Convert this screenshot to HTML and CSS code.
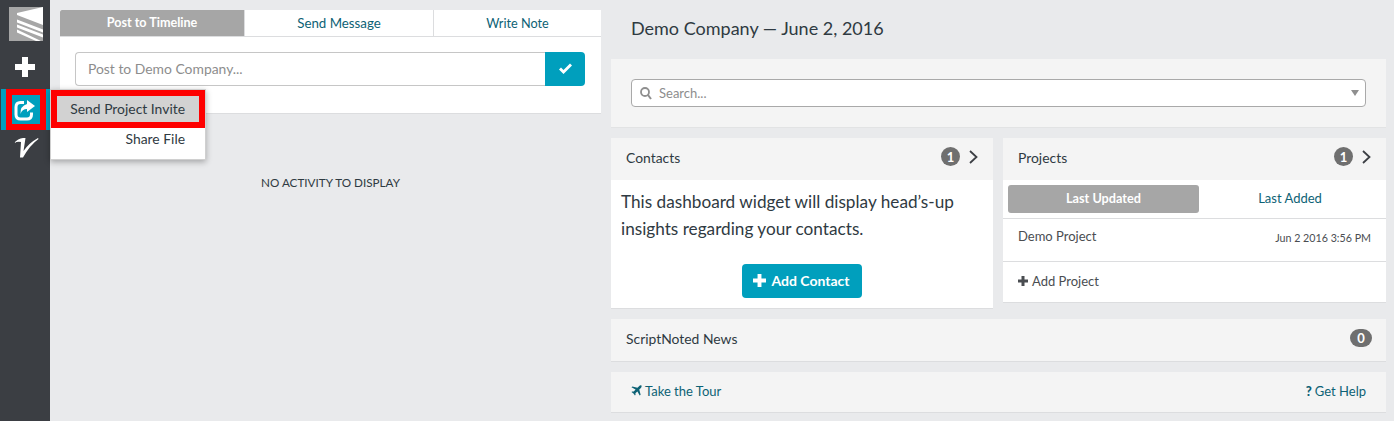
FILE: index.html
```html
<!DOCTYPE html>
<html lang="en">
<head>
<meta charset="utf-8">
<title>Demo Company</title>
<link rel="stylesheet" href="styles.css">
</head>
<body>
<div class="app">
  <nav class="side">
    <div class="logo">
      <svg width="34" height="34" viewBox="0 0 34 34"><rect width="34" height="34" fill="#a6a6a6"/><path d="M8 6L34 0V18L8 8Z" fill="#fff"/><path d="M8 12.500L34 22.500V25.500L8 15.500ZM8 17.500L34 27.500V30.500L8 20.500ZM8 22.500L32 34H27L8 25.500Z" fill="#fff"/></svg>
    </div>
    <div class="side-plus">
      <svg width="20" height="20" viewBox="0 0 20 20"><path d="M7 0H13V7H20V13H13V20H7V13H0V7H7Z" fill="#fff"/></svg>
    </div>
    <div class="side-share">
      <div class="share-icon">
        <svg width="22" height="22" viewBox="0 0 22 22" fill="none"><path d="M10 3.500H6.500Q2 3.500 2 8V15.500Q2 20 6.500 20H13Q17.500 20 17.500 15.500V13.500" stroke="#fff" stroke-width="3"/><path d="M13 1L21 7L13 13V10Q8 10 6.500 15Q6 7 13 5Z" fill="#fff"/></svg>
      </div>
    </div>
    <div class="side-v">
      <svg width="26" height="21" viewBox="0 0 26 21"><path d="M1 6Q5 1.500 10 1L12.500 1L10.500 14Q16 6 25 1L25.500 2Q17 8 10 20.500H7L8 5Q5 4 1 6Z" fill="#fff"/></svg>
    </div>
  </nav>

  <main class="timeline">
    <div class="composer">
      <div class="tabs">
        <div class="tab tab-active">Post to Timeline</div>
        <div class="tab tab-mid">Send Message</div>
        <div class="tab tab-last">Write Note</div>
      </div>
      <div class="post-row">
        <div class="post-input">Post to Demo Company...</div>
        <div class="post-btn">
          <svg width="15" height="12" viewBox="0 0 15 12"><path d="M1 6.500L5.500 11L14 2.500L12 .5L5.500 7L3 4.500Z" fill="#fff"/></svg>
        </div>
      </div>
    </div>
    <div class="empty">NO ACTIVITY TO DISPLAY</div>
  </main>

  <section class="dash">
    <h1 class="dash-title">Demo Company — June 2, 2016</h1>
    <div class="search-panel">
      <div class="search">
        <svg width="12" height="13" viewBox="0 0 12 13" fill="none"><circle cx="5" cy="5" r="4" stroke="#8f8f8f" stroke-width="1.800"/><path d="M8 8L11 12" stroke="#8f8f8f" stroke-width="2"/></svg>
        <span class="search-text">Search...</span>
        <span class="search-caret"></span>
      </div>
    </div>
    <div class="cols">
      <div class="widget widget-contacts">
        <div class="widget-head">
          <span>Contacts</span>
          <span class="head-right"><span class="badge">1</span><svg class="chev" width="9" height="14" viewBox="0 0 9 14" fill="none"><path d="M1 1L7.500 7L1 13" stroke="#3c3f44" stroke-width="1.800"/></svg></span>
        </div>
        <p class="contacts-text">This dashboard widget will display head’s-up insights regarding your contacts.</p>
        <div class="contacts-action">
          <div class="add-contact">
            <svg width="13" height="13" viewBox="0 0 20 20"><path d="M7 0H13V7H20V13H13V20H7V13H0V7H7Z" fill="#fff"/></svg>
            Add Contact
          </div>
        </div>
      </div>
      <div class="widget widget-projects">
        <div class="widget-head">
          <span>Projects</span>
          <span class="head-right"><span class="badge">1</span><svg class="chev" width="9" height="14" viewBox="0 0 9 14" fill="none"><path d="M1 1L7.500 7L1 13" stroke="#3c3f44" stroke-width="1.800"/></svg></span>
        </div>
        <div class="proj-tabs">
          <div class="proj-tab proj-tab-active">Last Updated</div>
          <div class="proj-tab proj-tab-other">Last Added</div>
        </div>
        <div class="proj-row">
          <span>Demo Project</span>
          <span class="proj-date">Jun 2 2016 3:56 PM</span>
        </div>
        <div class="proj-add">
          <svg width="10" height="10" viewBox="0 0 20 20"><path d="M7 0H13V7H20V13H13V20H7V13H0V7H7Z" fill="#4a4d51"/></svg>
          Add Project
        </div>
      </div>
    </div>
    <div class="news">
      <span>ScriptNoted News</span>
      <span class="badge badge-wide">0</span>
    </div>
    <div class="foot">
      <span class="foot-link">
        <svg width="11" height="11" viewBox="0 0 12 12"><path d="M11.500 .5Q10 0 8.500 1.500L7 3L1.500 1.500L.5 2.500L5 5L3 7.200L1.300 7L.5 7.700L2.700 9.300L4.300 11.500L5 10.700L4.800 9L7 7L9.500 11.500L10.500 10.500L9 5L10.500 3.500Q12 2 11.500 .5Z" fill="#0d6275"/></svg>
        Take the Tour
      </span>
      <span class="foot-link"><b class="qm">?</b> Get Help</span>
    </div>
  </section>
</div>

<div class="mark mark-icon"></div>
<div class="menu">
  <div class="menu-item menu-item-on"><span>Send Project Invite</span></div>
  <div class="menu-item menu-item-plain"><span>Share File</span></div>
</div>
</body>
</html>
```
FILE: styles.css
```css
* { box-sizing: border-box; }
html, body { margin: 0; padding: 0; height: 100%; }
body {
  background: #e9eaec;
  font-family: "Lato", "Open Sans", sans-serif;
  color: #2f3a42;
  overflow: hidden;
}
.app { display: flex; height: 421px; }

.side {
  width: 50px;
  flex: none;
  background: #3b3e43;
  display: flex;
  flex-direction: column;
  align-items: center;
  padding-top: 7px;
}
.logo { height: 34px; margin-left: 1px; }
.logo svg, .side-plus svg, .side-v svg, .share-icon svg { display: block; }
.side-plus { margin-top: 16px; height: 20px; }
.side-share {
  margin-top: 12px;
  width: 49px;
  height: 41px;
  margin-left: 1px;
  background: #009fbd;
  display: flex;
  align-items: center;
  justify-content: center;
}
.share-icon { width: 22px; height: 22px; margin-right: 1px; }
.side-v { margin-top: 7px; height: 21px; margin-left: 1px; }

.timeline { width: 541px; margin-left: 10px; flex: none; padding-top: 10px; }
.composer { background: #fff; height: 104px; border-bottom: 1px solid #dcdddf; }
.tabs { display: flex; height: 27px; border-bottom: 1px solid #dcdddf; font-size: 13px; }
.tab { display: flex; align-items: center; justify-content: center; color: #0d6275; padding-bottom: 1px; }
.tab-active { width: 184px; background: #a6a6a6; color: #fff; font-weight: 700; font-size: 12.600px; border-radius: 2px 0 0 0; }
.tab-mid { width: 190px; border-right: 1px solid #dcdddf; border-left: 1px solid #dcdddf; font-size: 13.300px; }
.tab-last { flex: 1; font-size: 12.700px; }
.post-row { display: flex; margin: 15px 16px 0 15px; height: 34px; }
.post-input {
  flex: 1;
  border: 1px solid #c6c6c6;
  border-right: 0;
  border-radius: 4px 0 0 4px;
  font-size: 13.900px;
  color: #8d8d8d;
  padding: 0 0 2px 12px;
  display: flex;
  align-items: center;
}
.post-btn {
  width: 40px;
  background: #009fbd;
  border-radius: 0 4px 4px 0;
  display: flex;
  align-items: center;
  justify-content: center;
}
.empty { margin-top: 61px; text-align: center; font-size: 11.700px; line-height: 14px; color: #2f3a42; }

.dash { width: 775px; margin-left: 10px; flex: none; }
.dash-title { margin: 0; font-size: 18px; font-weight: 400; height: 59px; line-height: 57px; padding-left: 20px; color: #2f3a42; }
.search-panel { background: #f4f4f4; height: 69px; padding: 20px; border-bottom: 1px solid #e2e3e4; margin-bottom: 10px; }
.search {
  background: #fff;
  border: 1px solid #a9a9a9;
  border-radius: 4px;
  height: 28px;
  display: flex;
  align-items: center;
  padding: 0 6px 0 8px;
  font-size: 13px;
  color: #8d8d8d;
}
.search-text { margin-left: 7px; flex: 1; }
.search-caret { width: 0; height: 0; border-left: 4px solid transparent; border-right: 4px solid transparent; border-top: 6px solid #8f8f8f; }

.cols { display: flex; gap: 10px; align-items: flex-start; margin-bottom: 11px; height: 170px; }
.widget { background: #fff; border-bottom: 1px solid #dcdddf; }
.widget-contacts { width: 382px; flex: none; height: 171px; }
.widget-projects { flex: 1; min-width: 0; height: 165px; }
.widget-head {
  background: #f4f4f4;
  height: 42px;
  display: flex;
  justify-content: space-between;
  align-items: center;
  padding: 0 16px 4px 15px;
  font-size: 13.900px;
}
.head-right { display: flex; align-items: center; gap: 9px; margin-top: -1px; margin-right: -1px; }
.badge {
  width: 19px;
  height: 19px;
  border-radius: 50%;
  background: #6f6f6f;
  color: #fff;
  font-size: 13px;
  font-weight: 700;
  display: flex;
  align-items: center;
  justify-content: center;
}
.chev { display: block; }
.contacts-text { margin: 8px 10px 0; font-size: 17.200px; line-height: 27px; color: #2f3a42; }
.contacts-action { display: flex; justify-content: center; margin-top: 22px; padding-right: 1px; }
.add-contact {
  background: #009fbd;
  border-radius: 4px;
  width: 120px;
  height: 34px;
  padding-bottom: 2px;
  color: #fff;
  font-size: 14px;
  font-weight: 700;
  display: flex;
  align-items: center;
  justify-content: center;
  gap: 5px;
}
.proj-tabs { display: flex; height: 39px; padding: 5px 5px 0; border-bottom: 1px solid #dcdddf; font-size: 13px; }
.proj-tab { height: 28px; display: flex; align-items: center; justify-content: center; color: #0d6275; padding-bottom: 2px; }
.proj-tab-active { width: 191px; background: #a6a6a6; color: #fff; font-weight: 700; font-size: 12.700px; border-radius: 3px; }
.proj-tab-other { flex: 1; }
.proj-row {
  height: 43px;
  display: flex;
  justify-content: space-between;
  padding: 9px 15px 0;
  border-bottom: 1px solid #dcdddf;
  font-size: 13px;
  color: #4a4d51;
}
.proj-date { font-size: 10.700px; line-height: 20px; }
.proj-add { display: flex; align-items: center; gap: 4px; padding: 0 15px 2px; height: 40px; font-size: 13px; color: #4a4d51; }

.news {
  background: #f4f4f4;
  height: 43px;
  border-bottom: 1px solid #dcdddf;
  display: flex;
  justify-content: space-between;
  align-items: center;
  padding: 0 15px 3px;
  font-size: 13.900px;
  margin-bottom: 10px;
}
.badge-wide { width: 22px; height: 18px; border-radius: 9px; margin-top: -1px; margin-right: -1px; }
.foot {
  background: #f4f4f4;
  height: 41px;
  border-bottom: 1px solid #dcdddf;
  display: flex;
  justify-content: space-between;
  align-items: center;
  padding: 0 20px 3px;
  font-size: 13px;
  color: #0d6275;
}
.foot-link { display: flex; align-items: center; gap: 3px; }
.qm { font-weight: 900; }

.mark-icon { position: absolute; left: 6px; top: 89px; width: 40px; height: 41px; border: 6px solid #fe0000; }
.menu {
  position: absolute;
  left: 50px;
  top: 89px;
  width: 156px;
  height: 71px;
  background: #fff;
  border: 1px solid #d0d0d0;
  box-shadow: 0 2px 6px rgba(0,0,0,.3);
  font-size: 13.900px;
  color: #2f3a42;
}
.menu-item { display: flex; align-items: center; justify-content: flex-end; }
.menu-item-plain { height: 23px; padding: 0 20px 2px 0; }
.menu-item-on {
  height: 38px;
  background: #d2d2d2;
  border: 6px solid #fe0000;
  padding: 0 14px 2px 0;
}
```
